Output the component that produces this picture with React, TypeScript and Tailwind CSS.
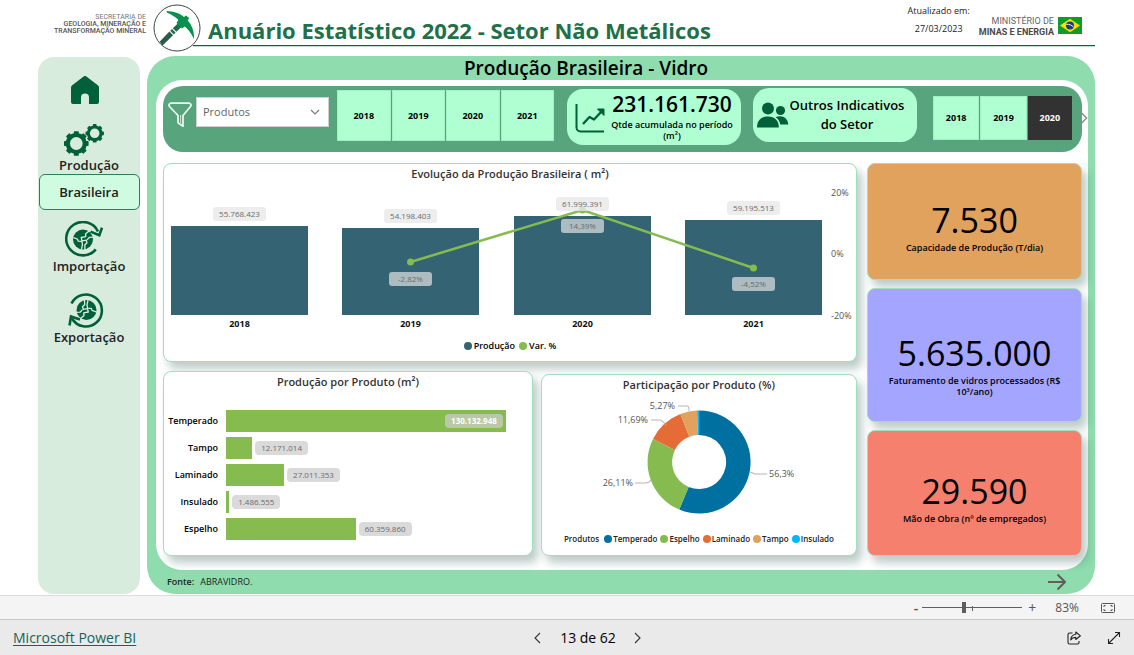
import React, { useState } from "react";

const FONT = "font-['Open_Sans','Noto_Sans',sans-serif]";
const CARD =
  "rounded-lg border border-[#9fdfb9] shadow-[5px_7px_9px_rgba(20,75,65,0.28)]";

/* ---------- icons ---------- */

function PickaxeLogo() {
  return (
    <svg viewBox="0 0 48 48" className="relative z-10 h-12 w-12 shrink-0" aria-hidden="true">
      <defs>
        <linearGradient id="handle" x1="0" y1="1" x2="1" y2="0">
          <stop offset="0" stopColor="#2b5c48" />
          <stop offset="1" stopColor="#0b8a4c" />
        </linearGradient>
      </defs>
      <circle cx="24" cy="24" r="23" fill="#fff" stroke="#3c4743" strokeWidth="1" />
      <path d="M6.600 37.800 16.400 27.600l3.600 3.600L9.600 41.600Z" fill="#2b5c48" />
      <path d="M17.200 26.800l1.800-1.800 3.600 3.600-1.800 1.800Z" fill="#2b6b4e" />
      <path d="M19.800 24.200 30.600 14l3.600 3.600L23.400 27.800Z" fill="url(#handle)" />
      <path d="M13.500 7c7 .3 13.500 2.300 17.500 6l2-1.600 3.200 2.700-1.500 2.400C39 21 41.500 28 41 35c-2.800-5.800-5.600-9.700-9.200-12.600l-2.800 2L23.500 19l1.800-3.200C22 12.800 18 10.300 14.200 8.800Z" fill="#0a9150" />
    </svg>
  );
}

function BrazilFlag() {
  return (
    <svg viewBox="0 0 24 17" className="h-[17px] w-6" role="img" aria-label="Brasil">
      <rect width="24" height="17" fill="#0d9b2c" />
      <path d="M12 1.800 22 8.500 12 15.200 2 8.500Z" fill="#fedd00" />
      <circle cx="12" cy="8.500" r="4" fill="#1b3c7c" />
      <path d="M8.300 7.400c2.800-.4 5.400.6 7.200 2.700" stroke="#fff" strokeWidth=".9" fill="none" />
    </svg>
  );
}

function HomeIcon() {
  return (
    <svg viewBox="0 0 28 28" className="h-7 w-7" aria-hidden="true">
      <path
        d="M12.600.5a2.200 2.200 0 0 1 2.800 0l11.400 8.700c.8.6 1.200 1.300 1.200 2.300V26a2 2 0 0 1-2 2h-8v-6.500a4 4 0 0 0-8 0V28H2a2 2 0 0 1-2-2V11.500c0-1 .4-1.700 1.200-2.300Z"
        fill="#00603a"
      />
    </svg>
  );
}

function Gear({ cx, cy, r, teeth }: { cx: number; cy: number; r: number; teeth: number }) {
  const items = Array.from({ length: teeth }, (_, i) => (i * 360) / teeth);
  const w = r * 0.4;
  return (
    <g fill="#00603a">
      {items.map((a) => (
        <rect
          key={a}
          x={cx - w / 2}
          y={cy - r}
          width={w}
          height={r * 0.36}
          rx={0.6}
          transform={`rotate(${a} ${cx} ${cy})`}
        />
      ))}
      <circle cx={cx} cy={cy} r={r * 0.69} fill="none" stroke="#00603a" strokeWidth={r * 0.34} />
    </g>
  );
}

function GearsIcon() {
  return (
    <svg viewBox="0 0 40 32" className="h-8 w-10" aria-hidden="true">
      <Gear cx={12.300} cy={19.500} r={12.300} teeth={8} />
      <Gear cx={30.700} cy={9.300} r={9.200} teeth={8} />
    </svg>
  );
}

function Globe({ cx, cy }: { cx: number; cy: number }) {
  return (
    <g transform={`translate(${cx - 10} ${cy - 10})`}>
      <circle cx="10" cy="10" r="10" fill="#00603a" />
      <g fill="none" stroke="#d8ecde" strokeWidth="1.300" strokeLinejoin="round">
        <path d="M16 1.500 12.500 4.500l.3 2.600-4.600.9.8 3.300 4.200-.6.8 2.500-2.200 2.300.2 4.500" />
        <path d="M.2 8 4.500 9.700l.8 2 3.600.2.600 3-1 5" />
        <path d="M14 10.400l2.500-2.600 3.500-.2" />
      </g>
    </g>
  );
}

function ImportIcon() {
  return (
    <svg viewBox="0 0 38 36" className="h-9 w-[38px]" aria-hidden="true">
      <path d="M30.800 28.300A16.700 16.700 0 1 1 33 10.500" fill="none" stroke="#00603a" strokeWidth="2.600" />
      <path d="M25.500 10.600 34.300 14.200 37 6.600" fill="none" stroke="#00603a" strokeWidth="2.600" />
      <Globe cx={18} cy={18.500} />
    </svg>
  );
}

function ExportIcon() {
  return (
    <svg viewBox="0 0 36 36" className="h-9 w-9" aria-hidden="true">
      <path d="M3.500 11.500A16 16 0 1 1 4 26.500" fill="none" stroke="#00603a" strokeWidth="2.600" />
      <path d="M1.500 33.500 3 24.500 12 27.500" fill="none" stroke="#00603a" strokeWidth="2.600" />
      <g transform="rotate(180 18.500 18)">
        <Globe cx={18.500} cy={18} />
      </g>
    </svg>
  );
}

function FunnelIcon() {
  return (
    <svg viewBox="0 0 24 26" className="h-[26px] w-6 shrink-0" fill="none" stroke="#eefcf4" strokeWidth="1.700" strokeLinejoin="round" aria-hidden="true">
      <path d="M3 1.200h18a2 2 0 0 1 1.500 3.300L15 13.500v10.700l-5-3.500v-7.200L1.500 4.500A2 2 0 0 1 3 1.200Z" />
      <path d="M12.600 13v8" strokeWidth=".8" />
    </svg>
  );
}

function TrendIcon() {
  return (
    <svg viewBox="0 0 30 30" className="h-[30px] w-[30px] shrink-0" fill="none" stroke="#00603a" aria-hidden="true">
      <path d="M1.500 1v23.500a4 4 0 0 0 4 4H29" strokeWidth="2" />
      <path d="M8 21l6.500-7 4.500 2.500 8-8.500" strokeWidth="2.400" strokeLinejoin="round" />
      <path d="M22.500 6H29v6.500Z" fill="#00603a" strokeWidth="1" />
    </svg>
  );
}

function PeopleIcon() {
  return (
    <svg viewBox="0 0 32 26" className="h-[26px] w-8 shrink-0" fill="#00603a" aria-hidden="true">
      <circle cx="11" cy="6.500" r="6" />
      <circle cx="23.500" cy="8.500" r="4.600" />
      <path d="M0 25.500C0 18.500 4 14.500 11 14.500s10.800 4 10.800 11Z" />
      <path d="M18.500 15c7-2.500 12.500 1 12.800 7.500h-8c-.6-3.300-2.300-5.800-4.800-7.500Z" />
    </svg>
  );
}

function Chevron({ dir, className }: { dir: "left" | "right" | "down"; className: string }) {
  const d = { left: "M8 2 3 7l5 5", right: "M3 2l5 5-5 5", down: "M2 5l4 4 4-4" }[dir];
  return (
    <svg viewBox="0 0 12 14" className={className} fill="none" stroke="currentColor" strokeWidth="1.100" aria-hidden="true">
      <path d={d} />
    </svg>
  );
}

/* ---------- header ---------- */

function Header() {
  return (
    <header className="flex h-14 items-start pt-1 pr-[39px]">
      <div className="mt-2.5 w-[146px] shrink-0 text-right font-['Roboto',sans-serif] text-[7px] leading-[7px] whitespace-nowrap text-[#555]">
        <div className="text-[#777]">SECRETARIA DE</div>
        <div className="font-medium">GEOLOGIA, MINERAÇÃO E</div>
        <div className="font-medium">TRANSFORMAÇÃO MINERAL</div>
      </div>
      <div className="ml-[7px]">
        <PickaxeLogo />
      </div>
      <div className="-ml-2 flex h-[42px] min-w-0 flex-1 items-start justify-between border-b border-[#1c5a44] pl-[15px] shadow-[0_1px_0_#bcdccd]">
        <h1 className="mt-[11px] text-[22px] leading-[30px] font-bold whitespace-nowrap text-[#20704b]">
          Anuário Estatístico 2022 - Setor Não Metálicos
        </h1>
        <div className="flex items-start">
          <div className="-mt-0.5 text-center text-[9px] leading-[18px] text-[#222]">
            <div>Atualizado em:</div>
            <div>27/03/2023</div>
          </div>
          <div className="mt-3 ml-[9px] text-right font-['Roboto',sans-serif] text-[9px] leading-[11px] whitespace-nowrap text-[#666]">
            <div>MINISTÉRIO DE</div>
            <div className="font-bold text-[#4a4a4a]">MINAS E ENERGIA</div>
          </div>
          <div className="mt-[13px] mr-[13px] ml-1">
            <BrazilFlag />
          </div>
        </div>
      </div>
    </header>
  );
}

/* ---------- side navigation ---------- */

function SideNav() {
  return (
    <nav className="mt-px flex w-[102px] shrink-0 flex-col items-center rounded-2xl bg-[#d8ecde] pt-[19px] text-[13px] leading-[18px] font-semibold text-[#222]">
      <a href="#inicio" aria-label="Início" className="mr-2">
        <HomeIcon />
      </a>
      <a href="#producao" className="mt-5 flex flex-col items-center">
        <span className="mr-2.5">
          <GearsIcon />
        </span>
        <span>Produção</span>
      </a>
      <button className="h-9 w-[101px] rounded-md border border-[#2f7d5b] bg-[#cffbe0]">
        Brasileira
      </button>
      <a href="#importacao" className="mt-[11px] flex flex-col items-center">
        <span className="mr-2.5">
          <ImportIcon />
        </span>
        <span>Importação</span>
      </a>
      <a href="#exportacao" className="mt-[17px] flex flex-col items-center">
        <span className="mr-1.5">
          <ExportIcon />
        </span>
        <span>Exportação</span>
      </a>
    </nav>
  );
}

/* ---------- filter bar ---------- */

function YearSlicer({
  years,
  initial,
  size,
}: {
  years: string[];
  initial?: string;
  size: string;
}) {
  const [active, setActive] = useState(initial);
  return (
    <div className={`flex gap-px ${size}`}>
      {years.map((y) => (
        <button
          key={y}
          onClick={() => setActive(y)}
          className={`flex-1 text-[9px] font-bold ${
            active === y
              ? "bg-[#323232] text-white"
              : "border border-[#9ff0c2] bg-[#b0ffd2] text-black"
          }`}
        >
          {y}
        </button>
      ))}
    </div>
  );
}

function FilterBar() {
  return (
    <div className="flex h-[66px] items-start rounded-[20px] bg-[#58a47c] pl-[5px]">
      <div className="mt-4">
        <FunnelIcon />
      </div>
      <div className="relative mt-[11px] ml-1">
        <select
          aria-label="Produtos"
          className="h-[30px] w-[133px] appearance-none border border-[#cfcfcf] bg-white pl-1.5 text-[11px] text-[#666]"
        >
          <option>Produtos</option>
        </select>
        <Chevron dir="down" className="pointer-events-none absolute top-2 right-2 h-3.5 w-3 text-[#777]" />
      </div>
      <div className="mt-1 ml-2">
        <YearSlicer years={["2018", "2019", "2020", "2021"]} size="h-[51px] w-[217px]" />
      </div>
      <div className="mt-[3px] ml-[13px] flex h-14 w-[174px] items-start rounded-2xl bg-[#b0ffd2] pl-2">
        <div className="mt-[14px]">
          <TrendIcon />
        </div>
        <div className="flex-1 pr-0.5 text-center text-black">
          <div className="text-[21px] leading-[30px] font-semibold">231.161.730</div>
          <div className="px-1 text-[9px] leading-[11px] font-semibold">Qtde acumulada no período (m²)</div>
        </div>
      </div>
      <button className="mt-0.5 ml-3 flex h-[54px] w-[164px] items-center rounded-2xl bg-[#b0ffd2] pl-1">
        <PeopleIcon />
        <span className="flex-1 pr-3 text-[13px] leading-[19px] font-semibold text-black">
          Outros Indicativos do Setor
        </span>
      </button>
      <div className="mt-2.5 ml-4 flex items-center">
        <YearSlicer years={["2018", "2019", "2020"]} initial="2020" size="h-11 w-[139px]" />
        <button aria-label="Próximo" className="-mr-4 ml-1">
          <Chevron dir="right" className="h-[18px] w-4 text-[#8a8a8a]" />
        </button>
      </div>
    </div>
  );
}

/* ---------- charts ---------- */

const YEARS = [
  { year: "2018", x: 8, top: 42, value: "55.768.423", labelY: 23 },
  { year: "2019", x: 179, top: 44, value: "54.198.403", labelY: 25, pct: "-2,82%", py: 78, boxY: 88 },
  { year: "2020", x: 351, top: 32, value: "61.999.391", labelY: 13, pct: "14,39%", py: 26, boxY: 35 },
  { year: "2021", x: 522, top: 36, value: "59.195.513", labelY: 17, pct: "-4,52%", py: 84, boxY: 93 },
];
const BAR_W = 137;
const BASE = 131;

function EvolutionChart() {
  const points = YEARS.filter((d) => d.pct).map((d) => `${d.x - 1 + BAR_W / 2},${d.py}`);
  return (
    <svg viewBox="0 0 692 148" className="block w-full" role="img" aria-label="Evolução da Produção Brasileira">
      {YEARS.map((d) => (
        <g key={d.year}>
          <rect x={d.x - 1} y={d.top} width={BAR_W} height={BASE - d.top} fill="#346473" />
          <text x={d.x - 1 + BAR_W / 2} y="143" textAnchor="middle" fontSize="9" fontWeight="700" fill="#111">
            {d.year}
          </text>
        </g>
      ))}
      <polyline points={points.join(" ")} fill="none" stroke="#85bb4f" strokeWidth="2.500" />
      {YEARS.filter((d) => d.pct).map((d) => (
        <circle key={d.year} cx={d.x - 1 + BAR_W / 2} cy={d.py} r="3.500" fill="#85bb4f" />
      ))}
      {YEARS.map((d) => (
        <g key={d.year} fontSize="8" textAnchor="middle" fill="#6b6b6b">
          <rect x={d.x + 41} y={d.labelY} width="53" height="14" rx="3" fill="#e8e8e8" fillOpacity=".8" />
          <text x={d.x - 1 + BAR_W / 2} y={d.labelY + 10}>{d.value}</text>
          {d.pct && (
            <>
              <rect x={d.x + 46} y={d.boxY} width="43" height="14" rx="3" fill="#e6e6e6" fillOpacity=".68" />
              <text x={d.x - 1 + BAR_W / 2} y={d.boxY! + 10}>{d.pct}</text>
            </>
          )}
        </g>
      ))}
      <g fontSize="9" fill="#555">
        <text x="667" y="12">20%</text>
        <text x="667" y="73">0%</text>
        <text x="667" y="135">-20%</text>
      </g>
    </svg>
  );
}

function Dot({ color }: { color: string }) {
  return (
    <svg viewBox="0 0 8 8" className="h-2 w-2 shrink-0" aria-hidden="true">
      <circle cx="4" cy="4" r="4" fill={color} />
    </svg>
  );
}

const PRODUCTS = [
  { name: "Temperado", value: 130132948, label: "130.132.948" },
  { name: "Tampo", value: 12171014, label: "12.171.014" },
  { name: "Laminado", value: 27011353, label: "27.011.353" },
  { name: "Insulado", value: 1486555, label: "1.486.555" },
  { name: "Espelho", value: 60359860, label: "60.359.860" },
];

function ProductBars() {
  const max = PRODUCTS[0].value;
  return (
    <ul className="mt-[18px] flex flex-col gap-[5px] pr-[26px] pl-[7px]">
      {PRODUCTS.map((p, i) => (
        <li key={p.name} className="flex h-[22px] items-center">
          <span className="flex w-[47px] shrink-0 justify-end text-[9px] leading-[12px] font-semibold text-black">
            {p.name}
          </span>
          <div className="ml-2 flex h-full min-w-0 flex-1 items-center">
            <div
              className="flex h-full shrink-0 items-center justify-end bg-[#85bb4f]"
              style={{ width: `${(p.value / max) * 100}%` }}
            >
              {i === 0 && (
                <span className="mr-[3px] h-[14px] rounded bg-[#b9c9a8] px-1.5 text-[8px] leading-[14px] font-bold text-white">
                  {p.label}
                </span>
              )}
            </div>
            {i > 0 && (
              <span className="ml-[3px] h-[14px] rounded bg-[#dadada] px-1.5 text-[8px] leading-[14px] text-[#6b6b6b]">
                {p.label}
              </span>
            )}
          </div>
        </li>
      ))}
    </ul>
  );
}

const SHARES = [
  { name: "Temperado", pct: 56.3, color: "#0070a0" },
  { name: "Espelho", pct: 26.11, color: "#85bb4f" },
  { name: "Laminado", pct: 11.69, color: "#e66c37" },
  { name: "Tampo", pct: 5.27, color: "#e1a25d" },
  { name: "Insulado", pct: 0.63, color: "#00b7ff" },
];

function slicePath(cx: number, cy: number, ro: number, ri: number, from: number, to: number) {
  const at = (r: number, t: number) => {
    const a = t * 2 * Math.PI - Math.PI / 2;
    return `${(cx + r * Math.cos(a)).toFixed(2)} ${(cy + r * Math.sin(a)).toFixed(2)}`;
  };
  const big = to - from > 0.5 ? 1 : 0;
  return `M${at(ro, from)}A${ro} ${ro} 0 ${big} 1 ${at(ro, to)}L${at(ri, to)}A${ri} ${ri} 0 ${big} 0 ${at(ri, from)}Z`;
}

function ShareDonut() {
  let acc = 0;
  return (
    <svg viewBox="0 0 314 130" className="block w-full" role="img" aria-label="Participação por Produto">
      {SHARES.map((s) => {
        const from = acc;
        acc += s.pct / 100;
        return <path key={s.name} d={slicePath(157, 67, 51.5, 27, from, acc)} fill={s.color} />;
      })}
      <g fill="none" stroke="#b5b5b5" strokeWidth="1">
        <path d="M136 11h9q2 0 2 5" />
        <path d="M109 25h8q3 0 7 5" />
        <path d="M93 88h10q4 0 6-3" />
        <path d="M208 77l5 2h12" />
      </g>
      <g fontSize="9" fill="#555">
        <text x="133" y="14" textAnchor="end">5,27%</text>
        <text x="106" y="28" textAnchor="end">11,69%</text>
        <text x="91" y="91" textAnchor="end">26,11%</text>
        <text x="227" y="82">56,3%</text>
      </g>
    </svg>
  );
}

function CardTitle({ children }: { children: React.ReactNode }) {
  return (
    <h3 className="text-center text-[11px] leading-5 font-semibold text-[#333]">{children}</h3>
  );
}

function Kpi({ value, label, className }: { value: string; label: string; className: string }) {
  return (
    <section className={`${CARD} ${className} px-5 text-center text-black`}>
      <div className="text-[34px] leading-[44px]">{value}</div>
      <div className="text-[9px] leading-[11px] font-semibold">{label}</div>
    </section>
  );
}

function Dashboard() {
  return (
    <main className="flex min-w-0 flex-1 flex-col rounded-[28px] bg-[#8fdcae] pr-[7px] pl-[9px]">
      <h2 className="h-6 pr-[72px] text-center text-[19px] leading-6 font-semibold text-black">
        Produção Brasileira - Vidro
      </h2>
      <div className="rounded-[26px] bg-white pt-1.5 pr-1.5 pb-[14px] pl-[7px]">
        <FilterBar />
        <div className="mt-[11px] flex gap-2.5">
          <div className="flex min-w-0 flex-1 flex-col gap-[9px]">
            <section className={`${CARD} h-[199px] bg-white`}>
              <CardTitle>Evolução da Produção Brasileira ( m²)</CardTitle>
              <EvolutionChart />
              <div className="mt-2 flex items-center justify-center gap-1 text-[9px] leading-3 font-semibold text-black">
                <Dot color="#346473" />
                <span className="-ml-0.5">Produção</span>
                <Dot color="#85bb4f" />
                <span className="-ml-0.5">Var. %</span>
              </div>
            </section>
            <div className="flex items-end gap-2">
              <section className={`${CARD} h-[185px] min-w-0 flex-[370] bg-white`}>
                <CardTitle>Produção por Produto (m²)</CardTitle>
                <ProductBars />
              </section>
              <section className={`${CARD} h-[182px] min-w-0 flex-[316] bg-white`}>
                <CardTitle>Participação por Produto (%)</CardTitle>
                <ShareDonut />
                <div className="mt-2 flex items-center justify-center gap-[3px] text-[8px] leading-3 font-semibold text-[#252423]">
                  <span className="mr-0.5">Produtos</span>
                  {SHARES.map((s) => (
                    <span key={s.name} className="flex items-center gap-px">
                      <Dot color={s.color} />
                      {s.name}
                    </span>
                  ))}
                </div>
              </section>
            </div>
          </div>
          <div className="flex w-[215px] shrink-0 flex-col gap-2">
            <Kpi value="7.530" label="Capacidade de Produção (T/dia)" className="h-[117px] bg-[#e1a25d] pt-[34px]" />
            <Kpi value="5.635.000" label="Faturamento de vidros processados (R$ 10³/ano)" className="h-[134px] bg-[#a3a5ff] pt-[42px]" />
            <Kpi value="29.590" label="Mão de Obra (nº de empregados)" className="h-[126px] bg-[#f4806d] pt-[38px]" />
          </div>
        </div>
      </div>
      <div className="flex h-6 items-center justify-between pr-[22px] pl-[11px] text-[9px] text-[#222]">
        <p>
          <span className="mr-1.5 font-semibold">Fonte:</span>ABRAVIDRO.
        </p>
        <a href="#proxima" aria-label="Próxima página">
          <svg viewBox="0 0 18 18" className="h-[18px] w-[18px]" fill="none" stroke="#605e5c" strokeWidth="2" aria-hidden="true">
            <path d="M0 9h17M9.500 1.500 17 9l-7.500 7.500" />
          </svg>
        </a>
      </div>
    </main>
  );
}

/* ---------- viewer chrome ---------- */

function ZoomBar() {
  return (
    <div className="flex h-6 items-center justify-end border-t border-[#dcdcdc] bg-[#f4f4f4] pr-[19px] text-[#555]">
      <button aria-label="Reduzir" className="text-[14px] leading-5 font-semibold">-</button>
      <div className="relative ml-1 flex h-5 w-[100px] items-center">
        <input
          type="range"
          aria-label="Zoom"
          min={0}
          max={100}
          defaultValue={41}
          className="h-px w-full appearance-none bg-[#605e5c] [&::-webkit-slider-thumb]:h-[11px] [&::-webkit-slider-thumb]:w-1 [&::-webkit-slider-thumb]:appearance-none [&::-webkit-slider-thumb]:bg-[#605e5c]"
        />
        <span className="absolute top-2 left-1/2 h-[5px] w-px bg-[#605e5c]" />
      </div>
      <button aria-label="Ampliar" className="ml-1.5 text-[14px] leading-5">+</button>
      <span className="ml-[19px] text-[12px] leading-5">83%</span>
      <button aria-label="Ajustar à página" className="ml-[22px]">
        <svg viewBox="0 0 14 10" className="h-2.5 w-3.5" fill="none" stroke="#555" aria-hidden="true">
          <rect x=".5" y=".5" width="13" height="9" rx="1" />
          <path d="M3 4V2.500h1.500M9.500 2.500H11V4M11 6v1.500H9.500M4.500 7.500H3V6" />
        </svg>
      </button>
    </div>
  );
}

function ViewerFooter() {
  return (
    <footer className="grid flex-1 grid-cols-[1fr_auto_1fr] items-center border-t border-[#c8c8c8] bg-[#eaeaea] px-[13px]">
      <a href="#powerbi" className="text-[14px] leading-5 text-[#15645b] underline underline-offset-2">
        Microsoft Power BI
      </a>
      <div className="ml-[42px] flex items-center text-[14px] leading-5 text-black">
        <button aria-label="Página anterior">
          <Chevron dir="left" className="h-3.5 w-3 text-[#333]" />
        </button>
        <span className="mx-4">13 de 62</span>
        <button aria-label="Próxima página">
          <Chevron dir="right" className="h-3.5 w-3 text-[#333]" />
        </button>
      </div>
      <div className="flex items-center justify-end gap-[26px]">
        <button aria-label="Compartilhar">
          <svg viewBox="0 0 14 14" className="h-3.5 w-3.5" fill="none" stroke="#222" strokeWidth="1.100" strokeLinejoin="round" aria-hidden="true">
            <path d="M5.500 2H2.500A1.500 1.500 0 0 0 1 3.500v8A1.500 1.500 0 0 0 2.500 13h8a1.500 1.500 0 0 0 1.500-1.500V10" />
            <path d="M8.800 1 13.400 4.800 8.800 8.500V6.400C6.300 6.300 4.800 7.200 3.700 9c.2-3.200 2-5.400 5.100-5.800Z" />
          </svg>
        </button>
        <button aria-label="Tela cheia">
          <svg viewBox="0 0 14 14" className="h-3.5 w-3.5" fill="none" stroke="#222" strokeWidth="1.100" aria-hidden="true">
            <path d="M1.500 12.500l11-11M8 1.500h4.500V6M6 12.500H1.500V8" />
          </svg>
        </button>
      </div>
    </footer>
  );
}

export default function App() {
  return (
    <div className={`flex min-h-screen flex-col bg-white ${FONT}`}>
      <Header />
      <div className="flex gap-[7px] pr-[39px] pb-px pl-[38px]">
        <SideNav />
        <Dashboard />
      </div>
      <ZoomBar />
      <ViewerFooter />
    </div>
  );
}
